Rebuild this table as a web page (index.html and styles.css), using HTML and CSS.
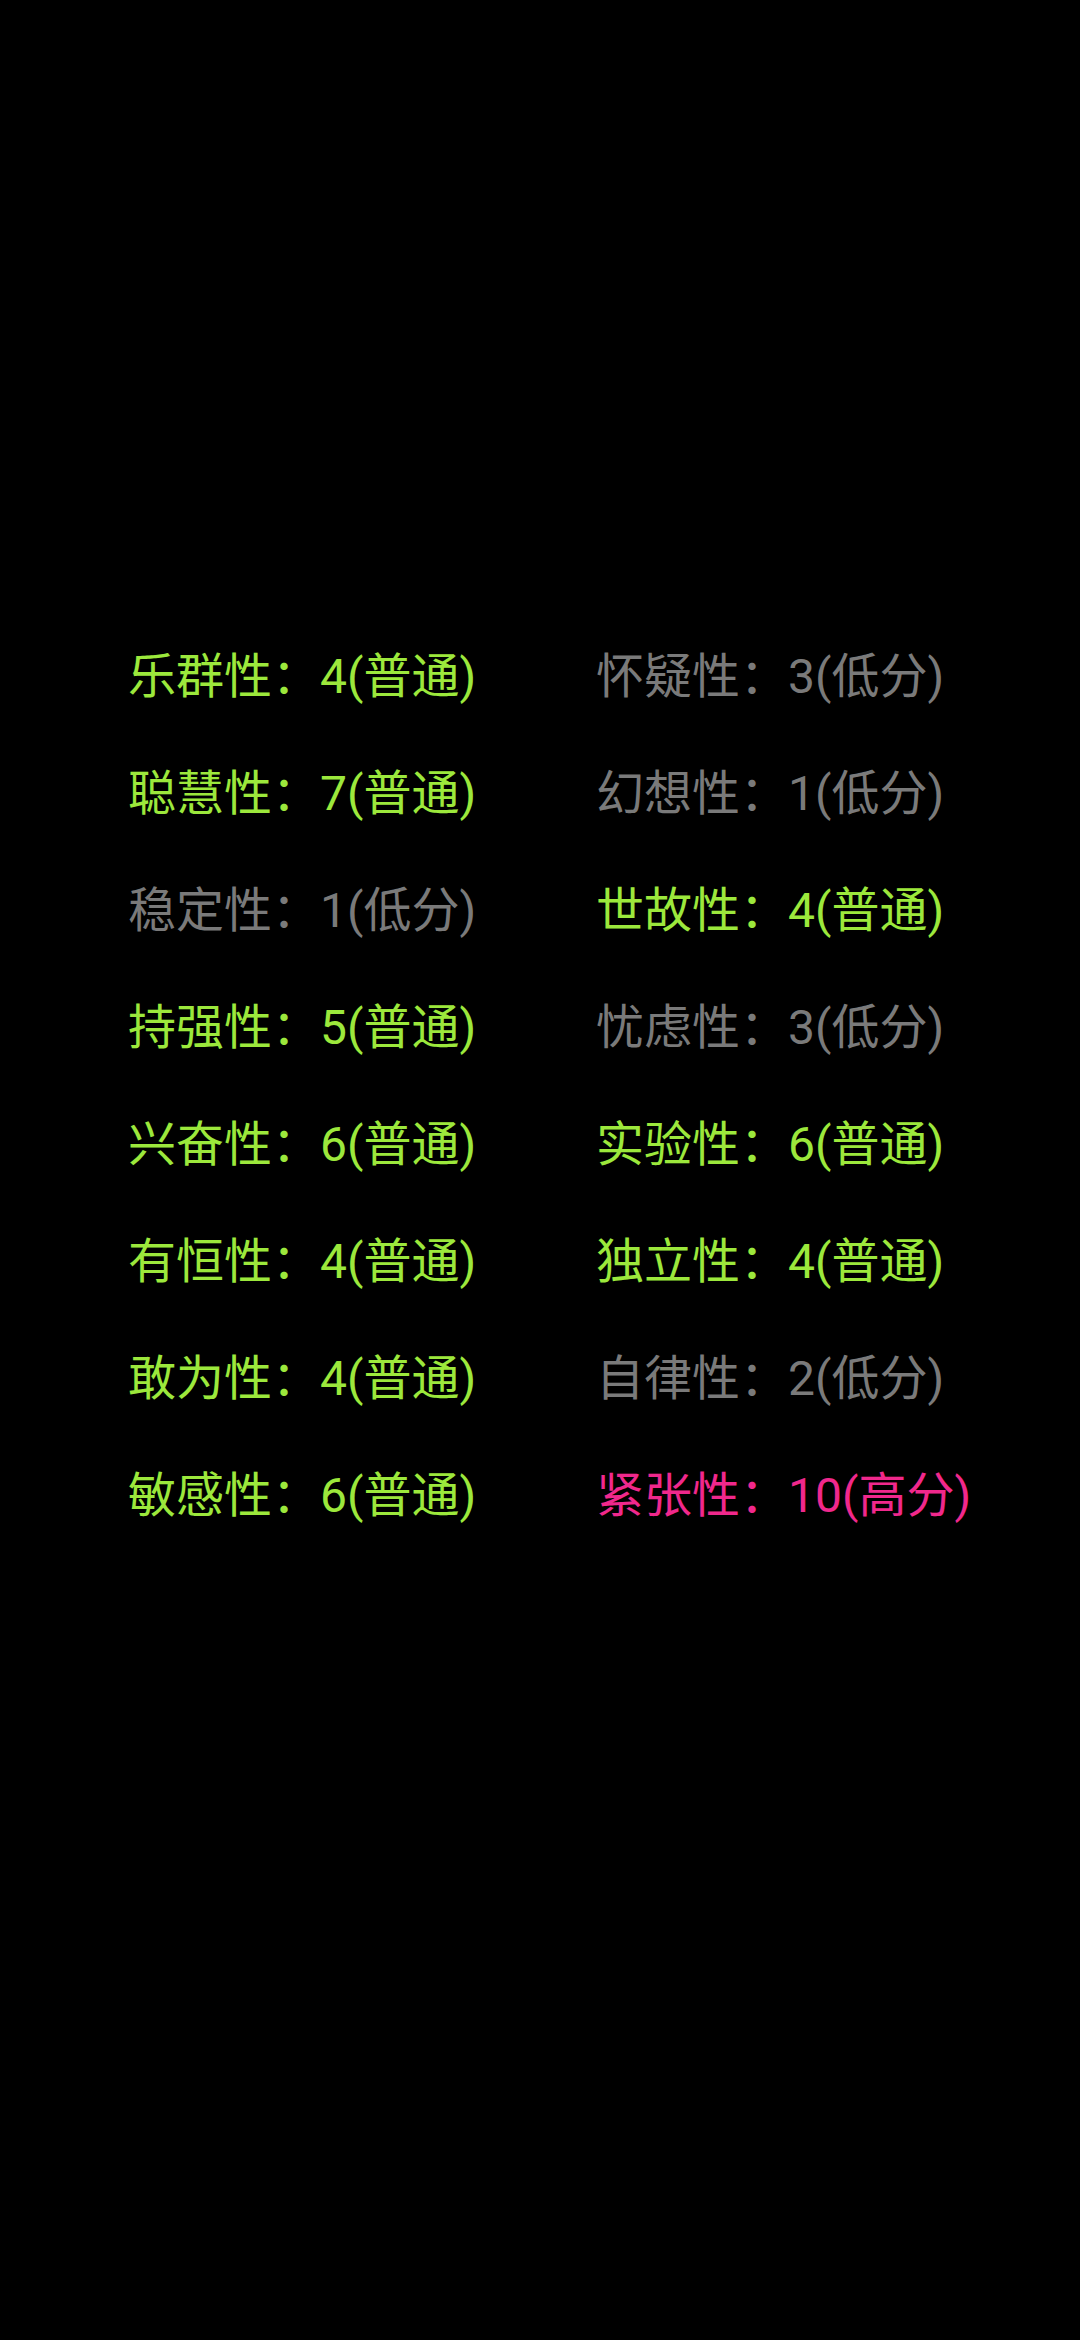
FILE: index.html
```html
<!DOCTYPE html>
<html lang="zh-CN">
<head>
<meta charset="utf-8">
<link rel="stylesheet" href="styles.css">
</head>
<body>
<main class="grid">
  <div class="item ok">乐群性：4(普通)</div>
  <div class="item low">怀疑性：3(低分)</div>
  <div class="item ok">聪慧性：7(普通)</div>
  <div class="item low">幻想性：1(低分)</div>
  <div class="item low">稳定性：1(低分)</div>
  <div class="item ok">世故性：4(普通)</div>
  <div class="item ok">持强性：5(普通)</div>
  <div class="item low">忧虑性：3(低分)</div>
  <div class="item ok">兴奋性：6(普通)</div>
  <div class="item ok">实验性：6(普通)</div>
  <div class="item ok">有恒性：4(普通)</div>
  <div class="item ok">独立性：4(普通)</div>
  <div class="item ok">敢为性：4(普通)</div>
  <div class="item low">自律性：2(低分)</div>
  <div class="item ok">敏感性：6(普通)</div>
  <div class="item high">紧张性：10(高分)</div>
</main>
</body>
</html>
```

FILE: styles.css
```css
html, body {
  margin: 0;
  padding: 0;
  background: #000;
}
body {
  width: 1080px;
  height: 2340px;
  font-family: Roboto, "Noto Sans CJK SC", sans-serif;
}
.grid {
  display: grid;
  grid-template-columns: 468px 468px;
  padding: 618px 0 0 128px;
}
.item {
  font-size: 48px;
  line-height: 117px;
  height: 117px;
  white-space: nowrap;
}
.ok { color: #9ce83c; }
.low { color: #7a7a7a; }
.high { color: #f0288c; }
```
